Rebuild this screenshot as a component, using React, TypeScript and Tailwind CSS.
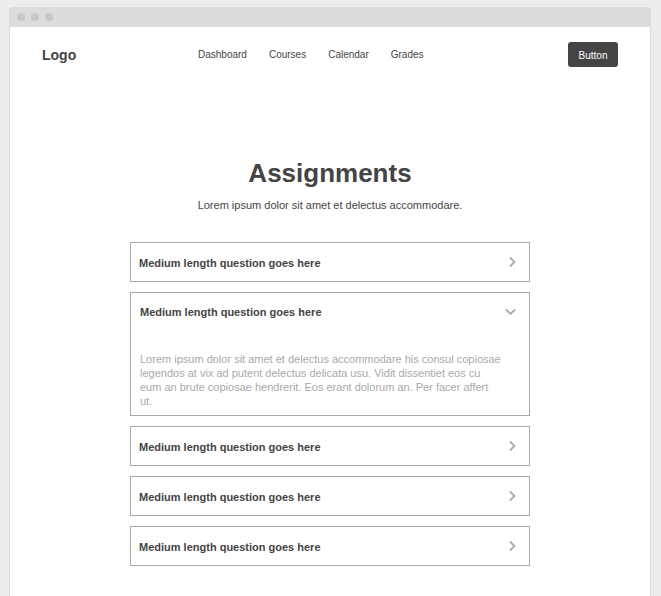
import { useState } from "react";

const links = ["Dashboard", "Courses", "Calendar", "Grades"];
const questions = [0, 1, 2, 3, 4];

function Chevron({ open }: { open: boolean }) {
  return (
    <svg
      viewBox="0 0 12 12"
      className="size-3 shrink-0"
      fill="none"
      stroke="#a9a9a9"
      strokeWidth="1.8"
      aria-hidden="true"
    >
      <path d={open ? "M1 3.5 L5.5 8 L10 3.5" : "M4 1.5 L8.5 6 L4 10.5"} />
    </svg>
  );
}

function Question({ id, open, onToggle }: { id: string; open: boolean; onToggle: () => void }) {
  return (
    <div className={open ? "border border-[#a9a9a9] px-[9px] pb-[7px]" : "border border-[#a9a9a9] px-2"}>
      <button
        type="button"
        aria-expanded={open}
        aria-controls={id}
        onClick={onToggle}
        className="flex h-[38px] w-full items-center justify-between pr-[3px] text-left text-[11px] font-bold"
      >
        <span className={open ? "" : "pt-[2px]"}>Medium length question goes here</span>
        <Chevron open={open} />
      </button>
      {open && (
        <p id={id} className="pt-[21px] text-[11px] leading-[14px] text-[#a9a9a9]">
          Lorem ipsum dolor sit amet et delectus accommodare his consul copiosae
          <br />
          legendos at vix ad putent delectus delicata usu. Vidit dissentiet eos cu
          <br />
          eum an brute copiosae hendrerit. Eos erant dolorum an. Per facer affert
          <br />
          ut.
        </p>
      )}
    </div>
  );
}

export default function App() {
  const [openIndex, setOpenIndex] = useState(1);

  return (
    <div className="flex min-h-screen flex-col bg-[#ededed] pt-[7px] pr-[10px] pl-[9px] font-['Liberation_Sans',Arial,sans-serif] text-[#444]">
      <div className="flex flex-1 flex-col rounded-t-[3px] border-x border-[#dcdcdc] bg-white">
        <div className="flex h-5 items-center gap-[6px] rounded-t-[2px] bg-[#dcdcdc] px-[7px]">
          <span className="size-2 rounded-full bg-[#c8c8c8]" />
          <span className="size-2 rounded-full bg-[#c8c8c8]" />
          <span className="size-2 rounded-full bg-[#c8c8c8]" />
        </div>

        <header className="flex h-[55px] items-center px-8">
          <a href="#" className="w-[156px] text-sm font-bold">
            Logo
          </a>
          <nav className="flex gap-[22px] text-[10px]">
            {links.map((link) => (
              <a key={link} href="#">
                {link}
              </a>
            ))}
          </nav>
          <button
            type="button"
            className="ml-auto h-[25px] w-[50px] rounded-[3px] bg-[#444] pt-[2px] text-[10px] text-white"
          >
            Button
          </button>
        </header>

        <main className="flex flex-col items-center px-4 pt-[75px] pb-[30px]">
          <h1 className="text-[26px] leading-8 font-bold">Assignments</h1>
          <p className="mt-2 text-[11px] leading-4">
            Lorem ipsum dolor sit amet et delectus accommodare.
          </p>
          <div className="mt-[29px] flex w-full max-w-[400px] flex-col gap-[10px]">
            {questions.map((index) => (
              <Question
                key={index}
                id={`answer-${index}`}
                open={openIndex === index}
                onToggle={() => setOpenIndex(openIndex === index ? -1 : index)}
              />
            ))}
          </div>
        </main>
      </div>
    </div>
  );
}
